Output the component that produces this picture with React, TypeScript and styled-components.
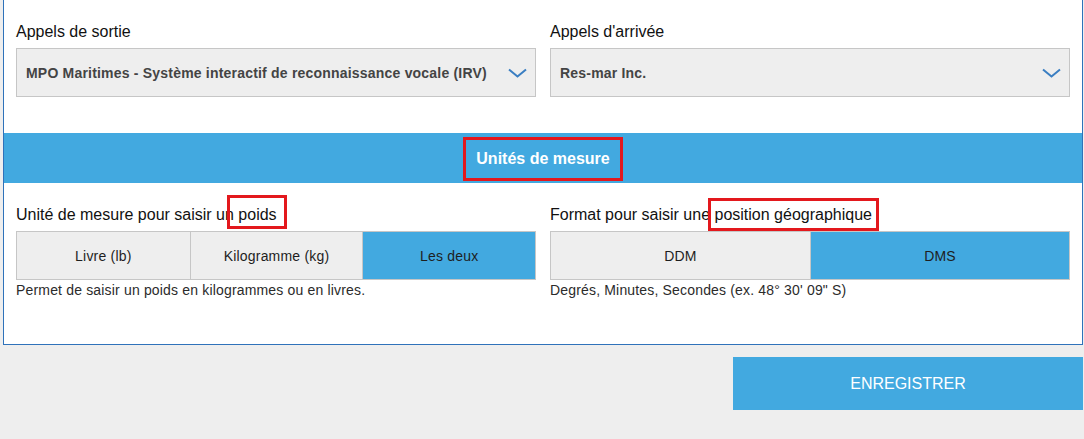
import * as React from 'react';
import styled, { createGlobalStyle } from 'styled-components';

const GlobalStyle = createGlobalStyle`
  html, body {
    margin: 0;
    padding: 0;
    background: #eeeeee;
    font-family: "Liberation Sans", Arial, sans-serif;
  }
`;

const Page = styled.div`
  width: 1084px;
  height: 439px;
  padding: 0 1px 0 3px;
  box-sizing: border-box;
  overflow: hidden;
`;

const Panel = styled.div`
  background: #ffffff;
  border: 1px solid #2f72ba;
  border-top: none;
`;

const Section = styled.div<{ $top: number; $bottom: number }>`
  display: grid;
  grid-template-columns: 520px 520px;
  column-gap: 14px;
  padding: ${(p) => p.$top}px 11px ${(p) => p.$bottom}px 12px;
`;

const Field = styled.div`
  display: flex;
  flex-direction: column;
`;

const Label = styled.div`
  font-size: 16px;
  line-height: 20px;
  color: #111111;
  margin-bottom: 6px;
`;

const Select = styled.div`
  height: 49px;
  box-sizing: border-box;
  display: flex;
  align-items: center;
  justify-content: space-between;
  padding: 0 8px 0 9px;
  background: #eeeeee;
  border: 1px solid #c6c6c6;
  font-size: 14px;
  font-weight: bold;
  letter-spacing: 0.2px;
  color: #444444;
`;

const Chevron = () => (
  <svg width="19" height="10" viewBox="0 0 19 10">
    <polyline points="1,1.5 9.5,8.5 18,1.5" fill="none" stroke="#3a7ec2" strokeWidth="2" />
  </svg>
);

const Band = styled.div`
  height: 50px;
  background: #42a9e0;
  display: flex;
  align-items: center;
  justify-content: center;
`;

const BandTitle = styled.span`
  display: inline-block;
  box-sizing: border-box;
  height: 44px;
  line-height: 38px;
  margin-top: 2px;
  padding: 0 10px 0 10px;
  border: 3px solid #e3181d;
  color: #ffffff;
  font-size: 16px;
  font-weight: bold;
`;

const Mark = styled.span<{ $t: number; $r: number; $b: number; $l: number }>`
  position: relative;

  &::after {
    content: '';
    position: absolute;
    top: ${(p) => p.$t}px;
    right: ${(p) => p.$r}px;
    bottom: ${(p) => p.$b}px;
    left: ${(p) => p.$l}px;
    border: 3px solid #e3181d;
    pointer-events: none;
  }
`;

const Segments = styled.div<{ $count: number }>`
  display: grid;
  grid-template-columns: repeat(${(p) => p.$count}, 1fr);
  height: 49px;
  box-sizing: border-box;
  border: 1px solid #c6c6c6;
`;

const Segment = styled.div<{ $active?: boolean }>`
  display: flex;
  align-items: center;
  justify-content: center;
  font-size: 14px;
  letter-spacing: 0.2px;
  color: #1e1e1e;
  background: ${(p) => (p.$active ? '#42a9e0' : '#eeeeee')};
  & + & {
    border-left: 1px solid #c6c6c6;
  }
`;

const Help = styled.div`
  font-size: 14px;
  line-height: 16px;
  letter-spacing: 0.17px;
  color: #2b2b2b;
  margin-top: 2px;
`;

const Actions = styled.div`
  display: flex;
  justify-content: flex-end;
  padding-top: 12px;
`;

const SaveButton = styled.button`
  width: 350px;
  height: 53px;
  border: none;
  background: #42a9e0;
  color: #ffffff;
  font-family: "Liberation Sans", Arial, sans-serif;
  font-size: 16px;
  text-transform: uppercase;
  cursor: pointer;
`;

export default function App() {
  return (
    <Page>
      <GlobalStyle />
      <Panel>
        <Section $top={22} $bottom={36}>
          <Field>
            <Label>Appels de sortie</Label>
            <Select>
              <span>MPO Maritimes - Système interactif de reconnaissance vocale (IRV)</span>
              <Chevron />
            </Select>
          </Field>
          <Field>
            <Label>Appels d'arrivée</Label>
            <Select>
              <span>Res-mar Inc.</span>
              <Chevron />
            </Select>
          </Field>
        </Section>
        <Band>
          <BandTitle>Unités de mesure</BandTitle>
        </Band>
        <Section $top={22} $bottom={46}>
          <Field>
            <Label>
              Unité de mesure pour saisir un{' '}
              <Mark $t={-11} $r={-10} $b={-6} $l={-11}>poids</Mark>
            </Label>
            <Segments $count={3}>
              <Segment>Livre (lb)</Segment>
              <Segment>Kilogramme (kg)</Segment>
              <Segment $active>Les deux</Segment>
            </Segments>
            <Help>Permet de saisir un poids en kilogrammes ou en livres.</Help>
          </Field>
          <Field>
            <Label>
              Format pour saisir une{' '}
              <Mark $t={-8} $r={-7} $b={-8} $l={-7}>position géographique</Mark>
            </Label>
            <Segments $count={2}>
              <Segment>DDM</Segment>
              <Segment $active>DMS</Segment>
            </Segments>
            <Help>Degrés, Minutes, Secondes (ex. 48° 30' 09" S)</Help>
          </Field>
        </Section>
      </Panel>
      <Actions>
        <SaveButton>Enregistrer</SaveButton>
      </Actions>
    </Page>
  );
}
